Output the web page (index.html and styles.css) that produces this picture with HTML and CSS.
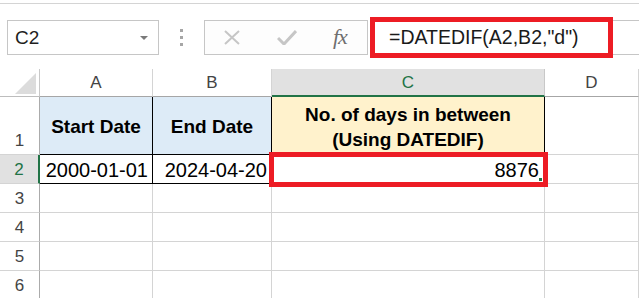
FILE: index.html
```html
<!DOCTYPE html>
<html>
<head>
<meta charset="utf-8">
<link rel="stylesheet" href="styles.css">
</head>
<body>
<div class="topline"></div>
<div class="fbar">
  <div class="namebox"><span class="nb-text">C2</span><span class="nb-arrow"></span></div>
  <div class="dots"><i></i><i></i><i></i></div>
  <div class="btns">
    <svg class="ic-x" width="18" height="15" viewBox="0 0 18 15"><path d="M2 1 L16 14 M16 1 L2 14" stroke="#c6c6c6" stroke-width="2" fill="none"/></svg>
    <svg class="ic-check" width="20" height="15" viewBox="0 0 20 15"><path d="M1 8 L7 14 L19 1" stroke="#c6c6c6" stroke-width="3" fill="none"/></svg>
    <span class="fx">fx</span>
  </div>
  <div class="formula">=DATEDIF(A2,B2,"d")</div>
  <div class="fbar-rest"></div>
</div>
<div class="sheet">
  <div class="corner"><span class="tri"></span></div>
  <div class="ch">A</div>
  <div class="ch">B</div>
  <div class="ch ch-sel">C</div>
  <div class="ch">D</div>

  <div class="rh rh-tall">1</div>
  <div class="c c-blue c-bold bk">Start Date</div>
  <div class="c c-blue c-bold bk">End Date</div>
  <div class="c c-yellow c-bold c-wrap bk">No. of days in between<br>(Using DATEDIF)</div>
  <div class="c"></div>

  <div class="rh rh-sel">2</div>
  <div class="c c-num bk">2000-01-01</div>
  <div class="c c-num bk">2024-04-20</div>
  <div class="c c-num bk c-active">8876<span class="handle"></span></div>
  <div class="c"></div>

  <div class="rh">3</div><div class="c"></div><div class="c"></div><div class="c"></div><div class="c"></div>
  <div class="rh">4</div><div class="c"></div><div class="c"></div><div class="c"></div><div class="c"></div>
  <div class="rh">5</div><div class="c"></div><div class="c"></div><div class="c"></div><div class="c"></div>
  <div class="rh">6</div><div class="c"></div><div class="c"></div><div class="c"></div><div class="c"></div>
</div>
</body>
</html>
```

FILE: styles.css
```css
html, body {
  margin: 0;
  padding: 0;
  background: #ffffff;
  overflow: hidden;
}
body {
  width: 639px;
  height: 298px;
  font-family: "Liberation Sans", Arial, sans-serif;
  color: #000;
}
.topline {
  height: 3px;
  border-bottom: 1px solid #d4d4d4;
}
.fbar {
  display: flex;
  align-items: center;
  height: 40px;
  margin-top: 13px;
}
.namebox {
  box-sizing: border-box;
  width: 152px;
  height: 35px;
  margin-left: 7px;
  border: 1px solid #c6c6c6;
  background: #fff;
  display: flex;
  align-items: center;
  justify-content: space-between;
  padding: 0 10px 0 7px;
}
.nb-text {
  font-size: 19px;
  color: #1f1f1f;
  padding-top: 1px;
}
.nb-arrow {
  width: 0;
  height: 0;
  border-left: 4px solid transparent;
  border-right: 4px solid transparent;
  border-top: 4px solid #7a7a7a;
  margin-top: 1px;
}
.dots {
  width: 45px;
  display: flex;
  flex-direction: column;
  align-items: center;
  gap: 4px;
}
.dots i {
  display: block;
  width: 3px;
  height: 3px;
  background: #a6a6a6;
}
.btns {
  box-sizing: border-box;
  width: 164px;
  height: 35px;
  border: 1px solid #c6c6c6;
  background: #fdfdfd;
  display: flex;
  align-items: center;
  padding-left: 18px;
}
.ic-x { margin-right: 36px; }
.ic-check { margin-right: 36px; }
.fx {
  font-family: "Liberation Serif", "Times New Roman", serif;
  font-style: italic;
  font-size: 22px;
  color: #6f6f6f;
  letter-spacing: -1px;
}
.formula {
  box-sizing: border-box;
  width: 243px;
  height: 41px;
  margin-left: 2px;
  border: 5px solid #ed1c24;
  background: #fff;
  font-size: 19.5px;
  color: #1a1a1a;
  display: flex;
  align-items: center;
  padding-left: 14px;
  padding-top: 1px;
}
.fbar-rest {
  flex: 1;
  height: 35px;
  box-sizing: border-box;
  border-top: 1px solid #c6c6c6;
  border-bottom: 1px solid #c6c6c6;
}
.sheet {
  margin-top: 12px;
  display: grid;
  grid-template-columns: 40px 113px 119px 273px 94px;
  grid-template-rows: 28px 58px 29px 29px 29px 29px 29px;
}
.sheet > div {
  box-sizing: border-box;
}
.corner {
  border-right: 1px solid #c8c8c8;
  border-bottom: 1px solid #bdbdbd;
  position: relative;
}
.tri {
  position: absolute;
  left: 15px;
  top: 4px;
  width: 21px;
  height: 21px;
  background: #dcdcdc;
  clip-path: polygon(100% 0, 100% 100%, 0 100%);
}
.ch {
  border-right: 1px solid #d4d4d4;
  border-bottom: 1px solid #a6a6a6;
  display: flex;
  align-items: center;
  justify-content: center;
  font-size: 17px;
  color: #444;
  padding-top: 1px;
}
.ch-sel {
  background: #e1e1e1;
  color: #217346;
  border-bottom: 2px solid #217346;
  border-right-color: #c8c8c8;
}
.rh {
  border-right: 1px solid #ababab;
  border-bottom: 1px solid #d4d4d4;
  display: flex;
  align-items: flex-end;
  justify-content: center;
  font-size: 17px;
  color: #444;
  padding-bottom: 3px;
}
.rh-sel {
  background: #e1e1e1;
  color: #217346;
  border-right: 2px solid #217346;
}
.c {
  border-right: 1px solid #d4d4d4;
  border-bottom: 1px solid #d4d4d4;
  display: flex;
  align-items: center;
  position: relative;
}
.bk {
  border-right-color: #000;
  border-bottom-color: #000;
}
.c-blue { background: #ddebf7; }
.c-yellow { background: #fff2cc; }
.c-bold {
  font-weight: bold;
  font-size: 19px;
  justify-content: center;
  text-align: center;
  padding-top: 2px;
}
.c-wrap {
  line-height: 25px;
}
.c-num {
  font-size: 20px;
  justify-content: flex-end;
  padding-right: 4px;
  padding-top: 2px;
}
.c-active {
  padding-right: 5px;
  outline: 5px solid #ed1c24;
  outline-offset: -2px;
  z-index: 2;
}
.handle {
  position: absolute;
  right: 2px;
  bottom: 2px;
  width: 3px;
  height: 3px;
  background: #217346;
}
```
